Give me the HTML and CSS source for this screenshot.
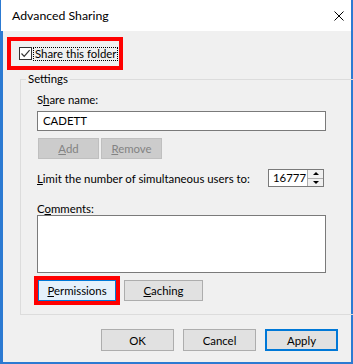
FILE: index.html
```html
<!DOCTYPE html>
<html lang="en">
<head>
  <meta charset="UTF-8">
  <title>Advanced Sharing</title>
  <link rel="stylesheet" href="styles.css">
</head>
<body>
  <div class="window">
    <div class="titlebar">
      <span class="title">Advanced Sharing</span>
      <svg class="close" width="10" height="10" viewBox="0 0 10 10">
        <path d="M0.5 0.5 L9.5 9.5 M9.5 0.5 L0.5 9.5" stroke="#000" stroke-width="1" fill="none"/>
      </svg>
    </div>

    <div class="content">
      <div class="highlight share-box">
        <label class="check">
          <span class="checkbox">
            <svg width="11" height="11" viewBox="0 0 11 11">
              <path d="M1.5 5.5 L4.2 8.3 L9.6 2.2" stroke="#333" stroke-width="1.2" fill="none"/>
            </svg>
          </span>
          <span class="focus">Share this folder</span>
        </label>
      </div>

      <div class="group">
        <span class="group-title">Settings</span>

        <div class="label">S<u>h</u>are name:</div>
        <div class="textbox">CADETT</div>

        <div class="btn-row">
          <button class="btn disabled"><u>A</u>dd</button>
          <button class="btn disabled"><u>R</u>emove</button>
        </div>

        <div class="limit-row">
          <span><u>L</u>imit the number of simultaneous users to:</span>
          <div class="spinner">
            <span class="spin-value">16777</span>
            <span class="spin-arrows">
              <span class="arrow up"></span>
              <span class="arrow down"></span>
            </span>
          </div>
        </div>

        <div class="label comments-label">C<u>o</u>mments:</div>
        <div class="textarea"></div>

        <div class="btn-row bottom-row">
          <div class="highlight perm-box">
            <button class="btn perm"><u>P</u>ermissions</button>
          </div>
          <button class="btn caching"><u>C</u>aching</button>
        </div>
      </div>

      <div class="dialog-buttons">
        <button class="btn big">OK</button>
        <button class="btn big">Cancel</button>
        <button class="btn big default">Apply</button>
      </div>
    </div>
  </div>
</body>
</html>
```

FILE: styles.css
```css
    body {
      margin: 0;
      font-family: 'Lato', 'Noto Sans', sans-serif;
      font-size: 11.4px;
      color: #000;
      background: #fff;
      white-space: nowrap;
    }

    u {
      text-decoration: underline;
      text-underline-offset: 1px;
    }

    .window {
      width: 353px;
      height: 364px;
      box-sizing: border-box;
      background: #2c7ad2;
      padding: 0 2px 2px 1px;
      display: flex;
      flex-direction: column;
    }

    .titlebar {
      height: 31px;
      background: #fff;
      display: flex;
      align-items: center;
      justify-content: space-between;
      padding: 0 7px 0 11px;
    }

    .title {
      font-size: 12.3px;
    }

    .close {
      display: block;
    }

    .content {
      flex: 1;
      background: #f0f0f0;
      margin-left: 2px;
      padding: 6px 13px 0 4px;
    }

    .highlight {
      border: 4px solid #f00;
    }

    .share-box {
      display: inline-flex;
      align-items: center;
      height: 25px;
      padding: 0 1px 0 8px;
    }

    .check {
      display: flex;
      align-items: center;
      gap: 1px;
    }

    .checkbox {
      width: 11px;
      height: 11px;
      border: 1px solid #333;
      background: #fff;
      display: flex;
    }

    .checkbox svg {
      display: block;
    }

    .focus {
      border: 1px dotted #000;
      padding: 0 1px 0 1px;
      line-height: 12px;
    }

    .group {
      position: relative;
      margin: 9px 0 0 13px;
      width: 318px;
      border: 1px solid #dcdcdc;
      padding: 12px 0 9px 16px;
    }

    .group-title {
      position: absolute;
      top: -9px;
      left: 5px;
      padding: 0 2px;
      background: #f0f0f0;
      line-height: 16px;
    }

    .label {
      line-height: 16px;
    }

    .textbox {
      margin-top: 3px;
      width: 282px;
      height: 18px;
      border: 1px solid #7a7a7a;
      background: #fff;
      line-height: 18px;
      padding-left: 5px;
    }

    .btn {
      font-family: inherit;
      font-size: 11.4px;
      color: #000;
      background: #e1e1e1;
      border: 1px solid #adadad;
      padding: 0;
      height: 21px;
      box-sizing: border-box;
    }

    .btn-row {
      display: flex;
      align-items: center;
      gap: 2px;
      margin-top: 7px;
      margin-left: 1px;
    }

    .btn.disabled {
      width: 61px;
      background: #cccccc;
      border-color: #bfbfbf;
      color: #838383;
    }

    .limit-row {
      margin-top: 10px;
      width: 287px;
      height: 18px;
      display: flex;
      align-items: center;
      justify-content: space-between;
    }

    .spinner {
      display: flex;
      height: 18px;
      width: 56px;
      box-sizing: border-box;
      border: 1px solid #7a7a7a;
      background: #fff;
    }

    .spin-value {
      flex: 1;
      line-height: 16px;
      padding-left: 4px;
      overflow: hidden;
    }

    .spin-arrows {
      width: 15px;
      display: flex;
      flex-direction: column;
      border-left: 1px solid #adadad;
      background: #f0f0f0;
    }

    .arrow {
      flex: 1;
      display: flex;
      align-items: center;
      justify-content: center;
    }

    .arrow.up {
      border-bottom: 1px solid #adadad;
    }

    .arrow::after {
      content: '';
      border-left: 3px solid transparent;
      border-right: 3px solid transparent;
    }

    .arrow.up::after {
      border-bottom: 3px solid #000;
    }

    .arrow.down::after {
      border-top: 3px solid #000;
    }

    .comments-label {
      margin-top: 15px;
      line-height: 13px;
    }

    .textarea {
      width: 287px;
      height: 56px;
      border: 1px solid #7a7a7a;
      background: #fff;
    }

    .bottom-row {
      margin-top: 3px;
      margin-left: -3px;
      gap: 4px;
    }

    .perm-box {
      display: flex;
    }

    .btn.perm {
      width: 78px;
      background: #e5f1fb;
      border-color: #0078d7;
    }

    .btn.caching {
      width: 79px;
    }

    .dialog-buttons {
      display: flex;
      justify-content: flex-end;
      gap: 9px;
      margin-top: 14px;
    }

    .btn.big {
      width: 73px;
      height: 22px;
    }

    .btn.default {
      border: 2px solid #0078d7;
    }
```
